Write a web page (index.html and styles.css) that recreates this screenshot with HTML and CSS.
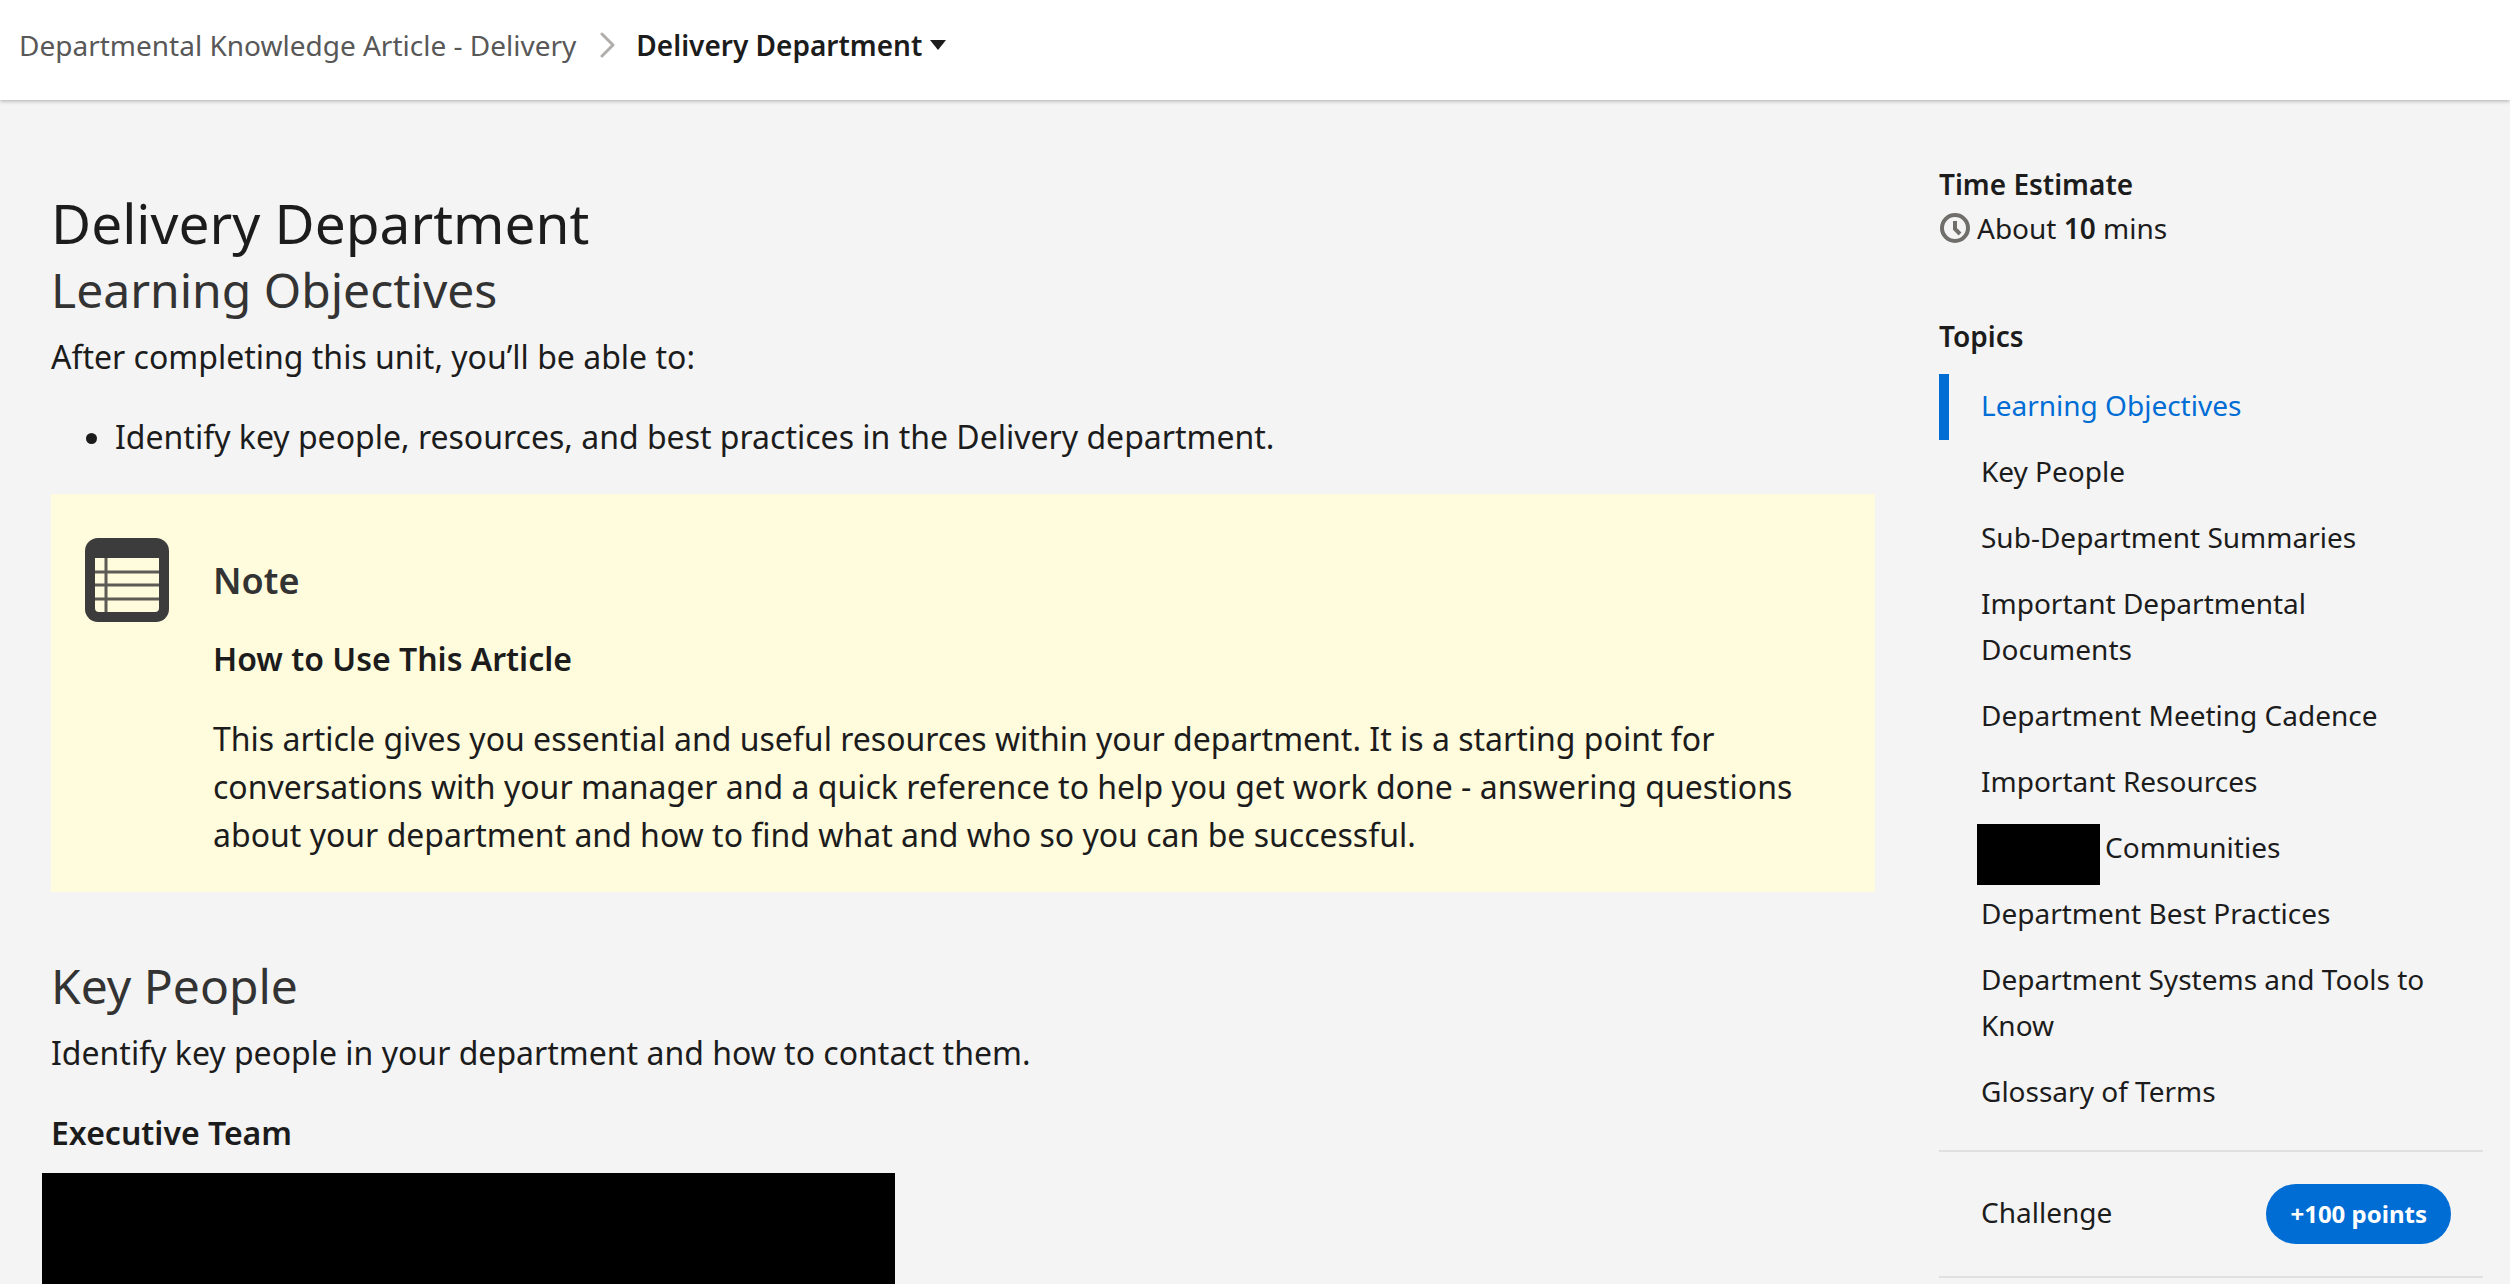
FILE: index.html
```
<!DOCTYPE html>
<html lang="en">
<head>
  <meta charset="UTF-8" />
  <title>Delivery Department</title>
  <meta name="viewport" content="width=device-width, initial-scale=1" />
  <link rel="stylesheet" href="styles.css">
</head>
<body>
  <header class="topbar">
    <nav class="breadcrumb" aria-label="Breadcrumb">
      <a class="crumb" href="#">Departmental Knowledge Article - Delivery</a>
      <svg class="chevron" viewBox="0 0 16 26" aria-hidden="true">
        <path d="M2 2 L13 13 L2 24" fill="none" stroke="#b0adab" stroke-width="3" stroke-linecap="round" stroke-linejoin="round" />
      </svg>
      <button class="crumb-current" type="button" aria-haspopup="true">
        Delivery Department
        <svg class="caret" viewBox="0 0 16 10" aria-hidden="true"><path d="M0 0h16L8 10z" fill="#1c1c1c" /></svg>
      </button>
    </nav>
  </header>

  <div class="layout">
    <main class="content">
      <h1>Delivery Department</h1>

      <section id="learning-objectives">
        <h2>Learning Objectives</h2>
        <p>After completing this unit, you’ll be able to:</p>
        <ul class="objectives">
          <li>Identify key people, resources, and best practices in the Delivery department.</li>
        </ul>
        <div class="note">
          <svg class="note-icon" viewBox="0 0 84 84" aria-hidden="true">
            <rect width="84" height="84" rx="13" fill="#3c3c3c" />
            <path d="M10 20h64v50a4 4 0 0 1-4 4H14a4 4 0 0 1-4-4z" fill="#fffbdd" />
            <path d="M10 34h64M10 47h64M10 61h64M21 20v54" stroke="#5c5b55" stroke-width="3" />
          </svg>
          <div class="note-body">
            <h3>Note</h3>
            <p><strong>How to Use This Article</strong></p>
            <p>This article gives you essential and useful resources within your department. It is a starting point for conversations with your manager and a quick reference to help you get work done - answering questions about your department and how to find what and who so you can be successful.</p>
          </div>
        </div>
      </section>

      <section id="key-people" class="people">
        <h2>Key People</h2>
        <p>Identify key people in your department and how to contact them.</p>
        <p><strong>Executive Team</strong></p>
        <div class="redacted-block"></div>
      </section>
    </main>

    <aside class="sidebar">
      <h4>Time Estimate</h4>
      <p class="time">
        <svg class="clock" viewBox="0 0 32 32" aria-hidden="true">
          <circle cx="16" cy="16" r="13" fill="none" stroke="#706e6b" stroke-width="4" />
          <path d="M16 9v8l5 5" fill="none" stroke="#706e6b" stroke-width="4" />
        </svg>
        <span>About <strong>10</strong> mins</span>
      </p>

      <h4 class="topics-title">Topics</h4>
      <ul class="topics">
        <li><a class="active" href="#learning-objectives">Learning Objectives</a></li>
        <li><a href="#key-people">Key People</a></li>
        <li><a href="#">Sub-Department Summaries</a></li>
        <li><a href="#">Important Departmental Documents</a></li>
        <li><a href="#">Department Meeting Cadence</a></li>
        <li><a href="#">Important Resources</a></li>
        <li><a class="has-redaction" href="#"><span class="redacted"></span>Communities</a></li>
        <li><a href="#">Department Best Practices</a></li>
        <li><a href="#">Department Systems and Tools to Know</a></li>
        <li><a href="#">Glossary of Terms</a></li>
      </ul>

      <div class="challenge">
        <a href="#">Challenge</a>
        <span class="points">+100 points</span>
      </div>
    </aside>
  </div>
</body>
</html>
```
FILE: styles.css
```
* {
  box-sizing: border-box;
}
body {
  margin: 0;
  height: 100vh;
  overflow: hidden;
  font-family: 'Noto Sans', sans-serif;
  font-size: 32px;
  line-height: 48px;
  background: #f4f4f4;
  color: #1c1c1c;
}
h1, h2, h3, h4, p, ul {
  margin: 0;
}
a {
  color: inherit;
  text-decoration: none;
}
strong {
  font-weight: 600;
}

/* Top bar */
.topbar {
  padding: 20px 19px 30px;
  background: #ffffff;
  box-shadow: 0 1px 4px rgba(0, 0, 0, 0.3);
}
.breadcrumb {
  display: flex;
  align-items: center;
  font-size: 28px;
  line-height: 50px;
}
.crumb {
  color: #585858;
}
.chevron {
  width: 16px;
  height: 26px;
  margin: 0 20px 0 24px;
}
.crumb-current {
  display: flex;
  align-items: center;
  gap: 8px;
  padding: 0;
  border: none;
  background: none;
  font: inherit;
  font-weight: 600;
  color: #1c1c1c;
  cursor: pointer;
}
.caret {
  width: 16px;
  height: 10px;
}

/* Page */
.layout {
  display: grid;
  grid-template-columns: 1fr 544px;
  gap: 64px;
  padding: 62px 27px 0 51px;
}
.content {
  padding-top: 25px;
}
h1 {
  font-size: 55px;
  line-height: 72px;
  font-weight: 400;
}
h2 {
  margin-bottom: 12px;
  font-size: 48px;
  line-height: 62px;
  font-weight: 400;
  color: #333333;
}
.content p + p {
  margin-top: 32px;
}
.objectives {
  margin: 32px 0 33px;
  padding-left: 64px;
}

/* Note */
.note {
  display: flex;
  gap: 44px;
  padding: 44px 64px 33px 34px;
  background: #fffbdd;
}
.note-icon {
  flex: none;
  width: 84px;
  height: 84px;
}
.note-body {
  padding-top: 21px;
}
.note h3 {
  margin-bottom: 32px;
  font-size: 36px;
  line-height: 44px;
  font-weight: 600;
  color: #333333;
}

.people {
  margin-top: 63px;
}
.redacted-block {
  width: 853px;
  height: 160px;
  margin: 16px 0 0 -9px;
  background: #000000;
}

/* Sidebar */
.sidebar {
  font-size: 28px;
  line-height: 44px;
}
.sidebar h4 {
  font-size: 28px;
  font-weight: 600;
}
.time {
  display: flex;
  align-items: center;
  gap: 6px;
}
.clock {
  width: 32px;
  height: 32px;
}
.sidebar .topics-title {
  margin: 64px 0 16px;
}
.topics {
  padding: 0 0 24px;
  list-style: none;
  line-height: 46px;
}
.topics a {
  display: block;
  padding: 8px 24px 12px 32px;
  border-left: 10px solid transparent;
}
.topics .active {
  border-left-color: #006dd5;
  color: #006dd5;
}
.topics .has-redaction {
  position: relative;
  padding-left: 156px;
}
.redacted {
  position: absolute;
  top: 8px;
  left: 28px;
  width: 123px;
  height: 61px;
  background: #000000;
}
.challenge {
  display: flex;
  justify-content: space-between;
  align-items: baseline;
  padding: 32px 32px 32px 42px;
  border-top: 2px solid #e0e0e0;
  border-bottom: 2px solid #e0e0e0;
}
.points {
  padding: 0 24px;
  border-radius: 30px;
  background: #006dd5;
  color: #ffffff;
  font-size: 24px;
  line-height: 60px;
  font-weight: 700;
}
```
